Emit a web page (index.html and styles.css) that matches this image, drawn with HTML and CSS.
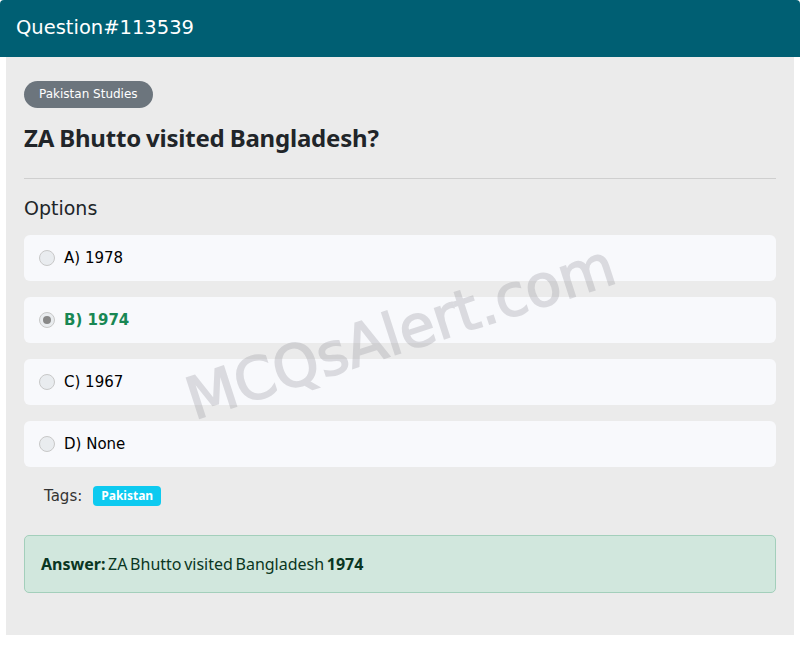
FILE: index.html
```html
<!DOCTYPE html>
<html lang="en">
<head>
    <meta charset="UTF-8">
    <meta name="viewport" content="width=device-width, initial-scale=1.0">
    <title>Question#113539</title>
    <link rel="stylesheet" href="styles.css">
</head>
<body>
<div class="question-card">
    <div class="question-header">Question#113539</div>
    <div class="question-body">
        <span class="subject">Pakistan Studies</span>
        <h1 class="question-title">ZA Bhutto visited Bangladesh?</h1>
        <hr>
        <h3 class="options-title">Options</h3>
        <div class="options">
            <label class="option"><span class="radio"></span>A) 1978</label>
            <label class="option correct"><span class="radio checked"></span>B) 1974</label>
            <label class="option"><span class="radio"></span>C) 1967</label>
            <label class="option"><span class="radio"></span>D) None</label>
        </div>
        <div class="tags">Tags: <span class="tag">Pakistan</span></div>
        <div class="answer"><b>Answer:</b> ZA Bhutto visited Bangladesh <b>1974</b></div>
        <div class="watermark">MCQsAlert.com</div>
    </div>
</div>
</body>
</html>
```

FILE: styles.css
```css
* {
    margin: 0;
    padding: 0;
    box-sizing: border-box;
}

body {
    font-family: "DejaVu Sans", sans-serif;
    background: #fff;
    color: #212529;
}

.question-card {
    width: 100%;
}

.question-header {
    background: #005f73;
    color: #fff;
    font-size: 19.5px;
    height: 57px;
    line-height: 56px;
    padding: 0 16px;
    border-radius: 4px 4px 0 0;
}

.question-body {
    position: relative;
    margin: 0 6px;
    background: #ebebeb;
    padding: 24px 18px 42px;
    overflow: hidden;
}

.subject {
    display: inline-block;
    background: #6c757d;
    color: #fff;
    font-size: 12px;
    height: 27px;
    line-height: 27px;
    padding: 0 15px;
    border-radius: 14px;
}

.question-title {
    font-family: "Noto Sans", sans-serif;
    font-size: 24px;
    font-weight: 700;
    letter-spacing: -0.2px;
    word-spacing: -1px;
    margin-top: 12px;
    line-height: 36px;
    color: #212529;
}

hr {
    border: 0;
    border-top: 1px solid #cfcfcf;
    margin: 22px 0 16px;
}

.options-title {
    font-size: 19px;
    font-weight: normal;
    line-height: 26px;
    margin-bottom: 14px;
}

.options {
    display: flex;
    flex-direction: column;
    gap: 16px;
}

.option {
    display: flex;
    align-items: center;
    gap: 9px;
    height: 46px;
    padding: 0 15px;
    background: #f8f9fc;
    border-radius: 6px;
    font-size: 15px;
    color: #000;
}

.option.correct {
    color: #198754;
    font-weight: 700;
}

.radio {
    width: 16px;
    height: 16px;
    border-radius: 50%;
    border: 1px solid #c8c8c8;
    background: #e9ecef;
    display: flex;
    align-items: center;
    justify-content: center;
}

.radio.checked::after {
    content: "";
    width: 8px;
    height: 8px;
    border-radius: 50%;
    background: #888;
}

.tags {
    margin: 19px 0 0 20px;
    font-size: 15px;
    color: #333;
    display: flex;
    align-items: center;
    gap: 11px;
    height: 20px;
}

.tag {
    background: #0dcaf0;
    color: #fff;
    font-family: "Noto Sans", sans-serif;
    font-size: 12px;
    font-weight: 700;
    border-radius: 4px;
    padding: 0 8px;
    height: 20px;
    line-height: 20px;
}

.answer {
    margin-top: 29px;
    background: #d1e7dd;
    border: 1px solid #a3cfbb;
    border-radius: 5px;
    padding: 0 16px;
    height: 58px;
    line-height: 56px;
    font-family: "Noto Sans", sans-serif;
    font-size: 16px;
    color: #0a3622;
    word-spacing: -1.5px;
}

.watermark {
    position: absolute;
    left: 182px;
    top: 310px;
    font-size: 58px;
    color: #96969e;
    -webkit-text-stroke: 1.6px #96969e;
    opacity: 0.3;
    transform: rotate(-18deg);
    transform-origin: left center;
    white-space: nowrap;
    pointer-events: none;
}
```
